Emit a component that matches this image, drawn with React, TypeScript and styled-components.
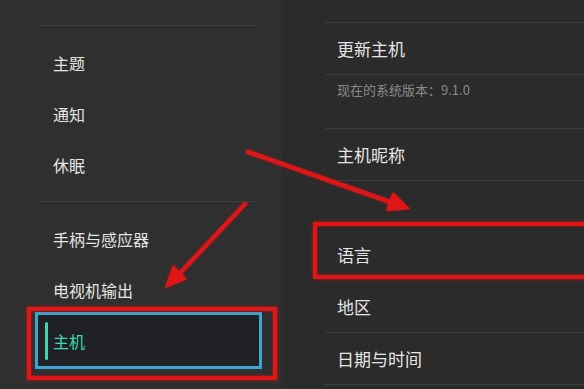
import styled, { createGlobalStyle } from 'styled-components';

const GlobalStyle = createGlobalStyle`
  html, body {
    margin: 0;
    padding: 0;
    background: #2b2b2b;
    overflow: hidden;
  }
  body {
    font-family: "Noto Sans CJK SC", "Noto Sans", sans-serif;
  }
`;

const Screen = styled.div`
  position: relative;
  width: 584px;
  height: 389px;
  display: grid;
  grid-template-columns: 282px 1fr;
  overflow: hidden;
`;

const Sidebar = styled.nav`
  background-color: #2f2f2f;
  padding: 25px 23px 0 38px;
`;

const SideGroup = styled.ul`
  list-style: none;
  margin: 0;
  padding: 11px 0;
`;

const Divider = styled.div`
  height: 1px;
  background-color: #3d3d3d;
`;

const SideItem = styled.li<{ $active?: boolean }>`
  position: relative;
  height: 51px;
  display: flex;
  align-items: center;
  padding-left: 15px;
  font-size: 16px;
  color: ${(p) => (p.$active ? '#3fd5ae' : '#e4e4e4')};
  background-color: ${(p) => (p.$active ? '#1f2126' : 'transparent')};
  box-shadow: ${(p) => (p.$active ? '0 0 0 3px #3aa6d2' : 'none')};

  &::before {
    content: '';
    display: ${(p) => (p.$active ? 'block' : 'none')};
    position: absolute;
    left: 7px;
    top: 7px;
    bottom: 6px;
    width: 3px;
    border-radius: 2px;
    background-color: #3fd5ae;
  }
`;

const Highlight = styled.span<{ $l: number; $t: number; $r: number; $b: number }>`
  position: absolute;
  left: ${(p) => p.$l}px;
  top: ${(p) => p.$t}px;
  right: ${(p) => p.$r}px;
  bottom: ${(p) => p.$b}px;
  border: 4px solid #e11515;
  box-shadow: 0 0 3px rgba(230, 20, 20, 0.8), inset 0 0 3px rgba(230, 20, 20, 0.7);
  pointer-events: none;
`;

const Content = styled.main`
  background-color: #2b2b2b;
  padding: 22px 0 0 43px;
`;

const Group = styled.ul<{ $lined?: boolean }>`
  list-style: none;
  margin: 0 0 47px;
  padding: 0;
  border-top: 1px solid ${(p) => (p.$lined ? '#3d3d3d' : 'transparent')};
`;

const Row = styled.li<{ $noLine?: boolean }>`
  position: relative;
  height: 51px;
  display: flex;
  align-items: center;
  padding-left: 12px;
  font-size: 17px;
  color: #e6e6e6;
  border-bottom: 1px solid ${(p) => (p.$noLine ? 'transparent' : '#3d3d3d')};
`;

const SubRow = styled.li`
  height: 54px;
  padding: 5px 0 0 12px;
  box-sizing: border-box;
  font-size: 13px;
  color: #8a8a8a;
  border-bottom: 1px solid #3d3d3d;
`;

const Arrows = styled.svg`
  position: absolute;
  inset: 0;
  pointer-events: none;
`;

export default function App() {
  return (
    <>
      <GlobalStyle />
      <Screen>
        <Sidebar>
          <Divider />
          <SideGroup>
            <SideItem>主题</SideItem>
            <SideItem>通知</SideItem>
            <SideItem>休眠</SideItem>
          </SideGroup>
          <Divider />
          <SideGroup>
            <SideItem>手柄与感应器</SideItem>
            <SideItem>电视机输出</SideItem>
            <SideItem $active>
              主机
              <Highlight $l={-11} $t={-8} $r={-18} $b={-14} />
            </SideItem>
          </SideGroup>
        </Sidebar>
        <Content>
          <Group $lined>
            <Row>更新主机</Row>
            <SubRow>现在的系统版本：9.1.0</SubRow>
            <Row>主机昵称</Row>
          </Group>
          <Group>
            <Row $noLine>
              语言
              <Highlight $l={-12} $t={-7} $r={-24} $b={1} />
            </Row>
            <Row>地区</Row>
            <Row>日期与时间</Row>
          </Group>
        </Content>
        <Arrows width="584" height="389" viewBox="0 0 584 389">
          <defs>
            <filter id="glow" x="-20%" y="-20%" width="140%" height="140%">
              <feGaussianBlur stdDeviation="1.2" />
              <feMerge>
                <feMergeNode />
                <feMergeNode in="SourceGraphic" />
              </feMerge>
            </filter>
          </defs>
          <g filter="url(#glow)" fill="#e01818" stroke="#e01818">
            <line x1="248" y1="152" x2="390" y2="202" strokeWidth="4" strokeLinecap="round" />
            <polygon points="410,209 386,211 393,192" stroke="none" />
            <line x1="245" y1="204" x2="181" y2="272" strokeWidth="4" strokeLinecap="round" />
            <polygon points="165,288 187,279 173,265" stroke="none" />
          </g>
        </Arrows>
      </Screen>
    </>
  );
}
